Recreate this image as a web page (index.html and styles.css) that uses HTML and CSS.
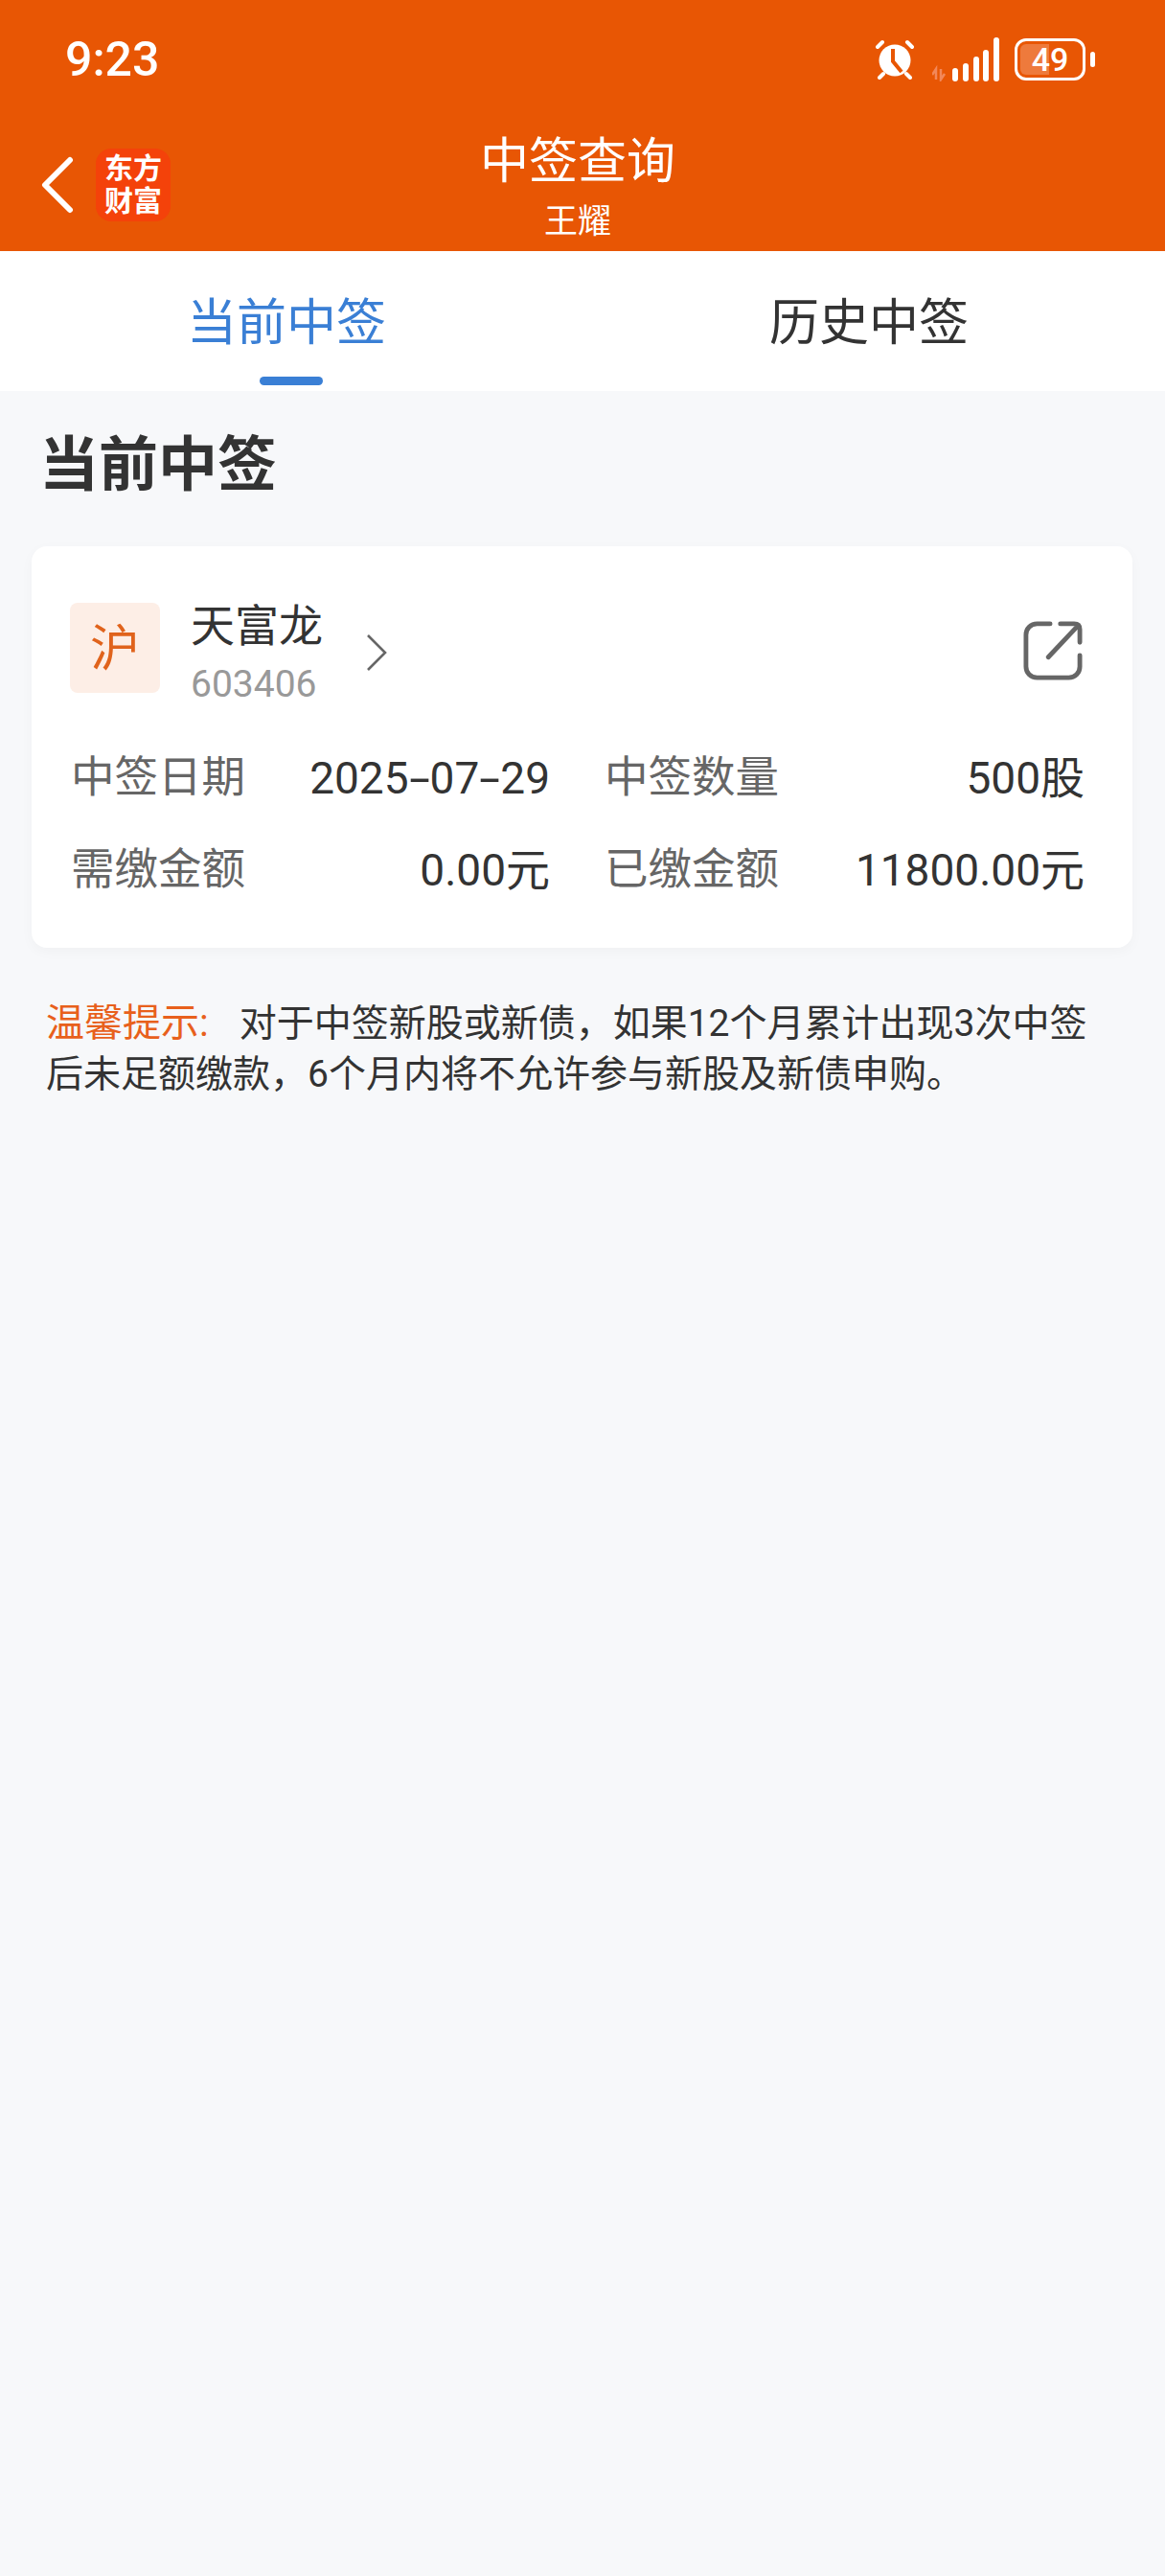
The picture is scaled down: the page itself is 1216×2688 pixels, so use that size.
FILE: index.html
```html
<!DOCTYPE html>
<html lang="zh-CN">
<head>
    <meta charset="UTF-8">
    <meta name="viewport" content="width=device-width, initial-scale=1.0">
    <title>中签查询</title>
    <link rel="stylesheet" href="styles.css">
</head>
<body>
    <!-- Orange header: status bar + title -->
    <div class="header">
        <div class="status-bar">
            <span class="clock">9:23</span>
            <div class="status-icons">
                <svg class="icon-alarm" width="42" height="42" viewBox="0 0 42 42">
                    <circle cx="21" cy="22" r="16.5" fill="#fff"/>
                    <path d="M19 10v13l9 11" fill="none" stroke="#e85604" stroke-width="4"/>
                    <path d="M3 8l5-5M39 8l-5-5M9 36l-4 4M33 36l4 4" fill="none" stroke="#fff" stroke-width="4" stroke-linecap="round"/>
                </svg>
                <svg class="icon-signal" width="70" height="46" viewBox="0 0 70 46">
                    <path d="M4 44V33L0 39M9 33v11l4-6" fill="none" stroke="#f2885a" stroke-width="2.5"/>
                    <rect x="21" y="32" width="6" height="14" rx="3" fill="#fff"/>
                    <rect x="32" y="27" width="6" height="19" rx="3" fill="#fff"/>
                    <rect x="43" y="20" width="6" height="26" rx="3" fill="#fff"/>
                    <rect x="53" y="13" width="6" height="33" rx="3" fill="#fff"/>
                    <rect x="64" y="0" width="6" height="46" rx="3" fill="#fff"/>
                </svg>
                <div class="battery">
                    <div class="battery-body">
                        <div class="battery-fill"></div>
                        <span class="battery-num">49</span>
                    </div>
                    <div class="battery-cap"></div>
                </div>
            </div>
        </div>
        <div class="nav-bar">
            <div class="nav-left">
                <svg width="36" height="60" viewBox="0 0 36 60">
                    <path d="M31 4L5 30l26 26" fill="none" stroke="#fff" stroke-width="6" stroke-linecap="round" stroke-linejoin="round"/>
                </svg>
                <div class="logo">东方<br>财富</div>
            </div>
            <div class="nav-title">
                <div class="title">中签查询</div>
                <div class="subtitle">王耀</div>
            </div>
        </div>
    </div>

    <!-- Tabs -->
    <div class="tabs">
        <div class="tab active">当前中签</div>
        <div class="tab">历史中签</div>
    </div>

    <div class="content">
        <h1 class="section-title">当前中签</h1>

        <div class="card">
            <div class="stock-row">
                <div class="market-tag">沪</div>
                <div class="stock-info">
                    <div class="stock-name">天富龙</div>
                    <div class="stock-code">603406</div>
                </div>
                <svg class="stock-arrow" width="24" height="40" viewBox="0 0 24 40">
                    <path d="M3 2l18 18L3 38" fill="none" stroke="#666" stroke-width="2.6"/>
                </svg>
                <svg class="share-icon" width="62" height="62" viewBox="0 0 64 64">
                    <path d="M29 3H15C8 3 3 8 3 15v34c0 7 5 12 12 12h34c7 0 12-5 12-12V37" fill="none" stroke="#666" stroke-width="5" stroke-linecap="round"/>
                    <path d="M27 39L59 5M40 3h15c4 0 6 2 6 6v14" fill="none" stroke="#666" stroke-width="5" stroke-linecap="round"/>
                </svg>
            </div>
            <div class="info-grid">
                <div class="info-item"><span class="label">中签日期</span><span class="value">2025<span class="dash">-</span>07<span class="dash">-</span>29</span></div>
                <div class="info-item"><span class="label">中签数量</span><span class="value">500股</span></div>
                <div class="info-item"><span class="label">需缴金额</span><span class="value">0.00元</span></div>
                <div class="info-item"><span class="label">已缴金额</span><span class="value">11800.00元</span></div>
            </div>
        </div>

        <p class="notice"><span class="notice-label">温馨提示:</span>对于中签新股或新债，如果12个月累计出现3次中签后未足额缴款，6个月内将不允许参与新股及新债申购。</p>
    </div>
</body>
</html>
```

FILE: styles.css
```css
/* Basic reset */
* {
    margin: 0;
    padding: 0;
    box-sizing: border-box;
}

html, body {
    height: 100%;
    overflow: hidden;
}

body {
    background-color: #f7f8fa;
    font-family: Roboto, "Noto Sans CJK SC", sans-serif;
    color: #333;
}

/* Header */
.header {
    background-color: #e85604;
    color: #fff;
    height: 262px;
}

.status-bar {
    height: 124px;
    padding: 34px 73px 0 68px;
    display: flex;
    justify-content: space-between;
    align-items: flex-start;
}

.clock {
    font-size: 50px;
    line-height: 56px;
    font-weight: 500;
}

.status-icons {
    display: flex;
    align-items: center;
    gap: 16px;
    margin-top: 5px;
}

.icon-signal {
    margin-left: 2px;
}

/* Battery */
.battery {
    display: flex;
    align-items: center;
    gap: 5px;
}

.battery-body {
    position: relative;
    width: 74px;
    height: 44px;
    border: 3px solid #fff;
    border-radius: 12px;
    padding: 3px;
    overflow: hidden;
}

.battery-fill {
    width: 49%;
    height: 100%;
    background-color: #ee7a3c;
    border-radius: 6px 0 0 6px;
}

.battery-num {
    position: absolute;
    inset: 0;
    text-align: center;
    font-size: 34px;
    line-height: 38px;
    font-weight: 500;
}

.battery-cap {
    width: 5px;
    height: 16px;
    background-color: #fff;
    border-radius: 3px;
}

/* Nav */
.nav-bar {
    position: relative;
    height: 138px;
    display: flex;
    justify-content: center;
    padding-right: 10px;
}

.nav-left {
    position: absolute;
    left: 42px;
    top: 31px;
    display: flex;
    align-items: center;
    gap: 22px;
}

.logo {
    width: 78px;
    height: 76px;
    background-color: #f4420a;
    border-radius: 16px;
    font-size: 30px;
    line-height: 34px;
    font-weight: 700;
    text-align: center;
    padding-top: 4px;
}

.nav-title {
    text-align: center;
}

.title {
    font-size: 51px;
    line-height: 60px;
    margin-top: 15px;
}

.subtitle {
    font-size: 35px;
    line-height: 40px;
    margin-top: 13px;
}

/* Tabs */
.tabs {
    height: 146px;
    background-color: #fff;
    display: flex;
}

.tab {
    position: relative;
    width: 608px;
    text-align: center;
    font-size: 52px;
    line-height: 152px;
    color: #333;
}

.tab.active {
    color: #3a7fd5;
    width: 598px;
}

.tab.active::after {
    content: '';
    position: absolute;
    left: 271px;
    bottom: 6px;
    width: 66px;
    height: 9px;
    background-color: #3a7fd5;
    border-radius: 5px;
}

.tab:last-child {
    flex: 1;
}

/* Content */
.content {
    padding: 0 33px;
}

.section-title {
    font-size: 62px;
    line-height: 80px;
    font-weight: 700;
    color: #333;
    padding: 38px 10px 0 8px;
    margin-bottom: 44px;
}

.card {
    height: 419px;
    background-color: #fff;
    border-radius: 16px;
    box-shadow: 0 4px 14px rgba(0, 0, 0, 0.03);
    padding: 59px 50px 0 40px;
    margin-right: 1px;
}

.stock-row {
    display: flex;
    align-items: center;
    height: 94px;
}

.market-tag {
    width: 94px;
    height: 94px;
    background-color: #fdeee6;
    border-radius: 8px;
    color: #e0631c;
    font-size: 52px;
    line-height: 98px;
    text-align: center;
}

.stock-info {
    align-self: flex-start;
    margin-left: 32px;
}

.stock-name {
    font-size: 46px;
    line-height: 52px;
    color: #333;
    margin-top: -2px;
}

.stock-code {
    font-size: 39px;
    line-height: 44px;
    margin-top: 13px;
    color: #999;
}

.stock-arrow {
    margin: 10px 0 0 44px;
}

.share-icon {
    margin: 6px 2px 0 auto;
}

.info-grid {
    display: grid;
    grid-template-columns: 500px 1fr;
    column-gap: 57px;
    margin: 41px 0 0 1px;
}

.info-item {
    display: flex;
    justify-content: space-between;
    align-items: center;
    height: 96px;
    font-size: 45.5px;
    line-height: 60px;
}

.label {
    color: #666;
}

.value {
    color: #333;
    font-size: 46px;
}

/* The hyphen in the date is drawn wider than Roboto's */
.dash {
    display: inline-block;
    width: 22px;
    text-align: center;
    transform: scaleX(1.7);
}

/* Notice */
.notice {
    margin: 52px 14px 0 15px;
    font-size: 39px;
    line-height: 53px;
    color: #333;
}

.notice-label {
    color: #e8601c;
    margin-right: 32px;
    font-size: 40px;
}
```
